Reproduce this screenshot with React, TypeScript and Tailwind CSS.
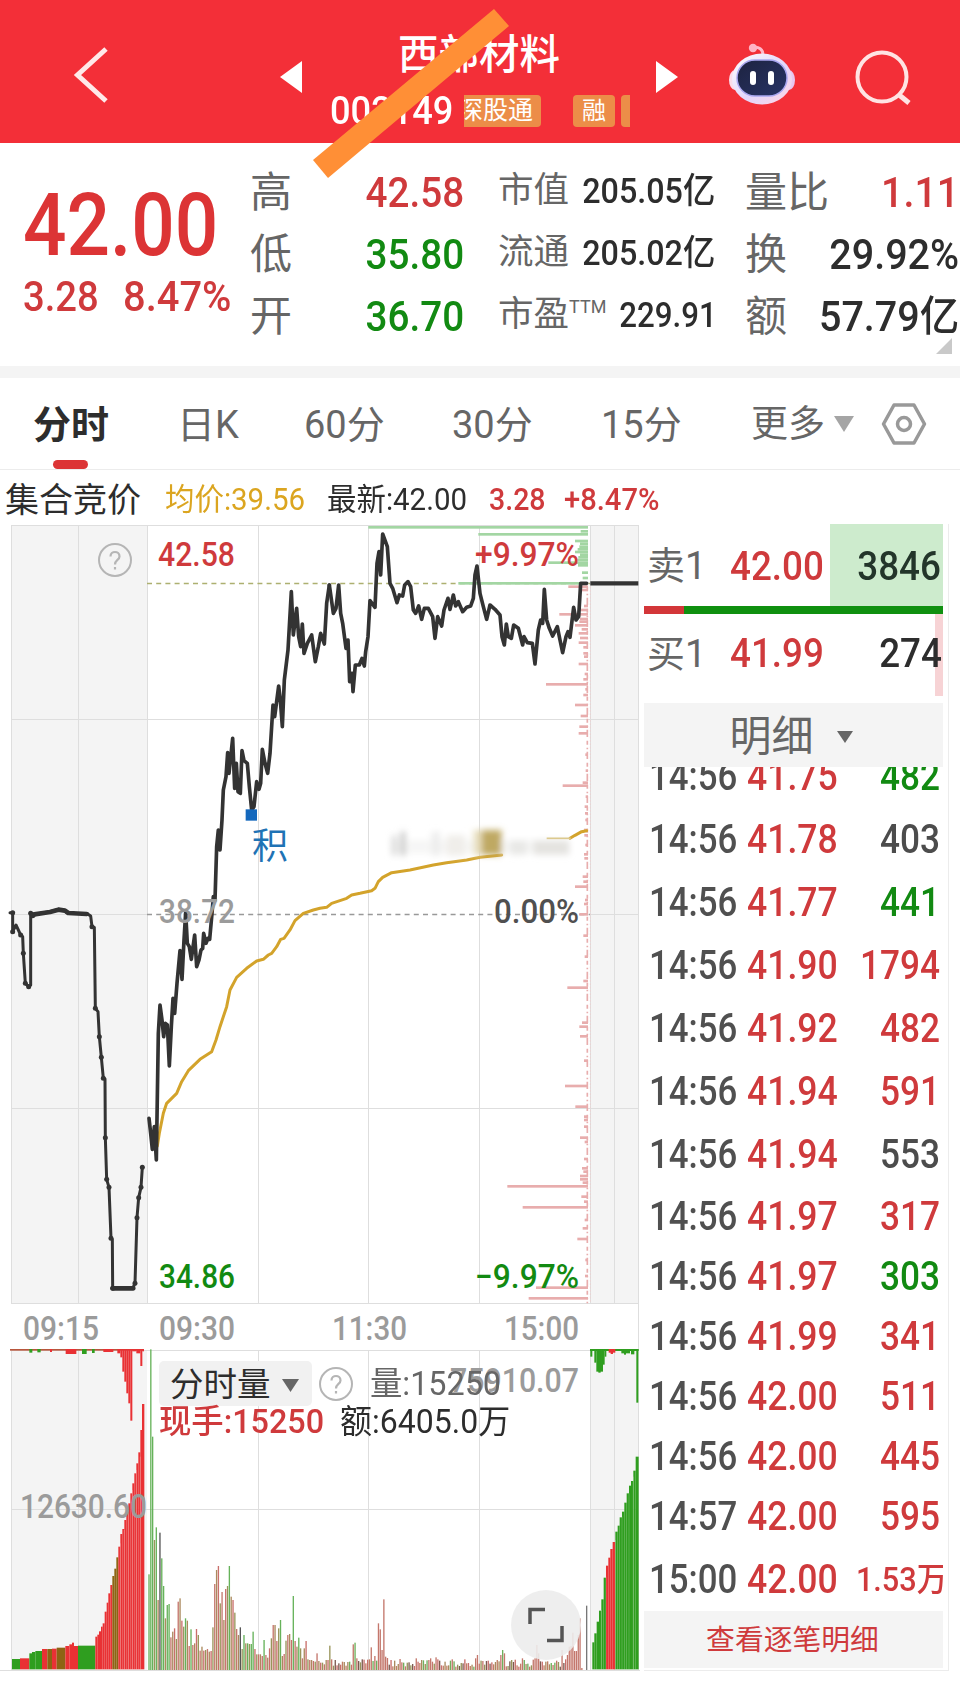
import React from 'react';
import { clsx } from 'clsx';

interface Stat {
  label: string;
  sup?: string;
  value: string;
  tone?: 'up' | 'down';
}

interface Trade {
  time: string;
  price: string;
  volume: string;
  tone: string;
  height: string;
}

const rangeStats: Stat[] = [
  { label: '高', value: '42.58', tone: 'up' },
  { label: '低', value: '35.80', tone: 'down' },
  { label: '开', value: '36.70', tone: 'down' },
];

const capStats: Stat[] = [
  { label: '市值', value: '205.05亿' },
  { label: '流通', value: '205.02亿' },
  { label: '市盈', sup: 'TTM', value: '229.91' },
];

const turnoverStats: Stat[] = [
  { label: '量比', value: '1.11', tone: 'up' },
  { label: '换', value: '29.92%' },
  { label: '额', value: '57.79亿' },
];

const RED = 'text-[#cf3a3c]';
const GREEN = 'text-[#128a12]';
const GRAY = 'text-[#4c4c4c]';

const trades: Trade[] = [
  { time: '14:56', price: '41.75', volume: '482', tone: GREEN, height: 'h-[63px]' },
  { time: '14:56', price: '41.78', volume: '403', tone: GRAY, height: 'h-[63px]' },
  { time: '14:56', price: '41.77', volume: '441', tone: GREEN, height: 'h-[63px]' },
  { time: '14:56', price: '41.90', volume: '1794', tone: RED, height: 'h-[63px]' },
  { time: '14:56', price: '41.92', volume: '482', tone: RED, height: 'h-[63px]' },
  { time: '14:56', price: '41.94', volume: '591', tone: RED, height: 'h-[63px]' },
  { time: '14:56', price: '41.94', volume: '553', tone: GRAY, height: 'h-[63px]' },
  { time: '14:56', price: '41.97', volume: '317', tone: RED, height: 'h-[60px]' },
  { time: '14:56', price: '41.97', volume: '303', tone: GREEN, height: 'h-[60px]' },
  { time: '14:56', price: '41.99', volume: '341', tone: RED, height: 'h-[60px]' },
  { time: '14:56', price: '42.00', volume: '511', tone: RED, height: 'h-[60px]' },
  { time: '14:56', price: '42.00', volume: '445', tone: RED, height: 'h-[60px]' },
  { time: '14:57', price: '42.00', volume: '595', tone: RED, height: 'h-[60px]' },
  { time: '15:00', price: '42.00', volume: '1.53万', tone: RED, height: 'h-[67px]' },
];

// Chart geometry is kept in thirds of a pixel, origin at the top of the price pane
const AUCTION =
  '30,1178 38,1178 38,1235 48,1215 55,1230 62,1245 68,1250 70,1300 76,1390 86,1400 92,1395 92,1180 98,1187 120,1180 150,1175 175,1168 190,1170 200,1178 225,1180 262,1181 272,1188 276,1220 283,1222 286,1465 294,1475 298,1550 304,1612 310,1675 315,1677 316,1853 320,1978 327,2002 333,2155 337,2158 338,2305 398,2305 405,2290 411,2093 416,2033 423,2002 427,1942';

const AUCTION_DOTS = [
  [38, 1178], [38, 1235], [62, 1245], [70, 1300], [76, 1390], [86, 1400], [92, 1180], [98, 1187], [276, 1220], [286, 1465],
  [298, 1550], [304, 1612], [310, 1675], [316, 1853], [320, 1978], [327, 2002], [333, 2155], [338, 2305], [405, 2290],
  [411, 2093], [416, 2033], [423, 2002], [427, 1942],
];

const PRICE_MORNING =
  '447,1795 452,1840 457,1888 463,1820 469,1920 475,1540 480,1455 486,1500 491,1550 496,1510 502,1515 508,1638 514,1520 519,1435 524,1480 531,1390 540,1292 546,1378 552,1260 557,1178 562,1270 568,1280 574,1318 584,1245 590,1340 597,1320 603,1290 608,1285 611,1240 618,1270 624,1255 629,1258 636,1180 640,1130 645,1140 650,980 655,930 660,990 666,900 670,810 678,770 683,698 687,760 698,655 704,805 709,730 714,815 721,820 726,692 732,722 742,730 748,800 755,870 762,860 770,785 777,808 782,790 787,688 795,730 803,760 810,700 819,555 824,590 836,498 841,540 847,620 853,480 864,390 874,215 880,345 890,265 896,350 902,380 907,312 912,400 922,370 935,345 946,425 955,380 962,340 973,372 980,250 988,195';

const PRICE_AFTERNOON =
  '28,195 40,280 48,265 56,195 62,280 68,310 78,385 84,360 89,485 96,460 99,515 106,435 118,435 126,415 133,438 137,395 144,350 150,242 165,262 171,130 177,95 182,165 188,42 202,80 210,190 218,205 231,248 238,225 248,228 254,195 264,185 272,200 280,270 287,280 296,258 305,298 313,265 325,265 338,290 345,355 353,290 365,318 372,270 384,235 390,268 400,225 407,258 415,245 428,275 440,262 452,258 460,235 465,165 471,138 480,220 490,260 500,298 510,255 525,268 540,285 546,350 553,375 559,312 565,350 574,355 581,315 595,325 608,375 612,350 622,368 637,370 645,432 655,330 662,300 668,310 673,208 680,300 688,325 698,348 712,320 720,360 728,398 738,350 744,335 750,352 761,262 768,300 776,290 782,190 800,190';

const AVERAGE =
  '472,1878 478,1840 490,1780 500,1750 515,1735 530,1720 545,1685 565,1652 600,1618 635,1595 648,1560 660,1520 680,1460 690,1410 710,1372 740,1345 770,1323 790,1318 805,1305 815,1300 830,1280 842,1258 852,1255 870,1230 885,1202 910,1180 940,1170 960,1165 980,1162 995,1150 1040,1135 1055,1125 1080,1120 1115,1112 1125,1105 1135,1085 1148,1072 1175,1058 1230,1050 1300,1035 1340,1028 1400,1020 1440,1012 1505,1005';

const AVERAGE_TAIL = '1710,955 1725,946 1745,935 1760,932';

// [y, left edge]
const SELL_LEVELS = [
  [22, 145], [43, 475], [34, 782], [63, 765], [71, 780], [80, 778], [88, 773], [96, 765], [104, 780], [112, 775], [120, 772],
  [128, 685], [136, 774], [158, 786], [174, 788], [190, 415],
];
const BUY_LEVELS = [
  [200, 745], [210, 783], [258, 792], [270, 780], [283, 718], [297, 780], [305, 778], [316, 765], [328, 785], [340, 776],
  [354, 780], [368, 776], [382, 790], [400, 790], [410, 792], [432, 776], [462, 794], [478, 790], [493, 678], [508, 796],
  [525, 790], [555, 765], [588, 782], [620, 778], [640, 776], [704, 796], [752, 797], [788, 788], [797, 728], [830, 797],
  [860, 794], [880, 795], [900, 796], [930, 792], [946, 793], [975, 796], [1003, 792], [1015, 793], [1070, 788], [1085, 790],
  [1100, 765], [1140, 795], [1152, 792], [1183, 778], [1247, 790], [1310, 794], [1383, 790], [1403, 742], [1508, 786],
  [1520, 778], [1549, 780], [1622, 792], [1698, 735], [1760, 766], [1790, 792], [1800, 792], [1820, 792], [1853, 780],
  [1866, 794], [1917, 792], [1945, 786], [1955, 790], [1968, 780], [1978, 780], [1988, 788], [1999, 562], [2030, 784],
  [2045, 792], [2062, 608], [2100, 794], [2125, 788], [2157, 772], [2220, 796], [2268, 795], [2303, 648], [2335, 626],
];

// Minute volume bars of the morning, measured as the y of their top edge
const VOLUME_TOPS = [
  733, 58, 320, 630, 592, 810, 608, 685, 768, 865, 825, 822, 922, 905, 895, 927, 815, 805, 872, 890, 865, 872, 948, 898, 945,
  940, 897, 915, 962, 950, 962, 960, 957, 965, 963, 892, 762, 720, 708, 820, 786, 870, 777, 768, 708, 800, 810, 848, 897, 915,
  892, 957, 915, 940, 940, 942, 942, 905, 957, 973, 973, 973, 978, 930, 975, 983, 955, 925, 885, 885, 933, 895, 870, 978, 972,
  932, 915, 912, 930, 798, 933, 950, 923, 955, 985, 955, 933, 988, 990, 990, 993, 995, 970, 993, 998, 998, 1003, 990, 990, 947,
];
const GREEN_BARS = [0, 1, 2, 4, 7, 8, 10, 11, 20, 23, 44, 52, 54, 56, 57, 63, 72, 79, 82];

const SPIKES: Record<number, number> = {
  12: 943, 13: 938, 14: 985, 22: 952, 24: 978, 26: 880, 27: 898, 28: 960, 29: 808, 30: 980, 31: 984, 38: 987, 47: 985, 55: 985,
  58: 982, 80: 985, 81: 975, 94: 975, 95: 960, 96: 970, 106: 985, 113: 985, 114: 945, 115: 970, 128: 960, 131: 975, 132: 950,
  133: 948, 134: 908, 135: 963, 136: 963, 137: 915, 138: 865, 139: 1014,
};

const VOLUME_COLORS = ['#c4776c', '#ab8a5e', '#c96f6b', '#98955a', '#6fb05c', '#c07f64', '#7c5a50'];

const minuteBars = [
  ...VOLUME_TOPS.map((top, i) => ({
    x: 445 + i * 5.48,
    top,
    fill: GREEN_BARS.includes(i) ? '#66b25a' : i === 6 || i === 50 ? '#555' : VOLUME_COLORS[(i * 5) % 4],
  })),
  ...Array.from({ length: 140 }, (_, i) => ({
    x: 993 + i * 5.4,
    top: SPIKES[i] ?? 988 + ((i * 37 + ((i * i) % 11) * 5) % 23),
    fill: i === 95 || i === 13 ? '#6fb05c' : SPIKES[i] ? '#c4776c' : VOLUME_COLORS[(i * 3 + (i >> 2)) % 7],
  })),
  { x: 1758, top: 827, fill: '#777' },
];

// [x, width, top, colour]
const R = '#e93134';
const G = '#2f9e1f';
const O = '#8d6414';
const auctionBars: [number, number, number, string][] = [
  [36, 24, 987, G], [60, 28, 985, R], [88, 8, 970, G], [96, 10, 966, G], [106, 20, 963, G], [126, 16, 957, R], [142, 14, 957, O],
  [156, 14, 956, R], [170, 26, 953, O], [196, 12, 948, R], [208, 8, 943, R], [216, 6, 938, R], [222, 12, 948, R],
  [234, 52, 947, G], [286, 6, 920, R], [292, 5, 914, R], [297, 6, 904, R], [303, 5, 890, R], [308, 6, 880, R], [314, 6, 845, R],
  [320, 5, 818, R], [325, 6, 790, R], [331, 6, 765, R], [337, 6, 738, O], [343, 6, 716, O], [349, 6, 682, O], [355, 6, 650, R],
  [361, 6, 612, R], [367, 6, 597, R], [373, 6, 570, R], [379, 6, 545, R], [385, 6, 520, R], [391, 6, 490, R], [397, 6, 460, R],
  [403, 6, 430, R], [409, 6, 400, R], [415, 6, 367, R], [421, 5, 300, R], [426, 7, 222, R],
];
const closeBars: [number, number, number, string][] = [
  [1777, 6, 937, G], [1783, 7, 910, G], [1790, 7, 875, G], [1797, 7, 842, G], [1804, 7, 808, G], [1811, 7, 743, G],
  [1818, 7, 707, R], [1825, 6, 683, R], [1831, 7, 657, R], [1838, 8, 636, R], [1846, 7, 605, G], [1853, 6, 587, G],
  [1859, 7, 562, G], [1866, 7, 545, G], [1873, 7, 518, G], [1880, 7, 490, G], [1887, 6, 467, G], [1893, 7, 453, G],
  [1900, 7, 422, G], [1907, 9, 380, G],
];
// Unmatched volume hangs from the top edge: [x, width, bottom, colour]
const hangingBars: [number, number, number, string][] = [
  [30, 402, 62, '#b8563c'], [88, 9, 68, G], [112, 10, 67, G], [150, 6, 66, R], [197, 32, 72, R], [246, 14, 72, G], [276, 8, 69, G],
  [310, 30, 66, R], [352, 9, 70, R], [361, 6, 82, R], [367, 6, 125, R], [373, 6, 155, R], [379, 6, 190, R], [385, 6, 220, R],
  [391, 6, 272, R], [397, 12, 64, R], [409, 12, 70, R], [421, 6, 108, R], [427, 5, 64, R],
  [1770, 146, 63, G], [1771, 6, 80, G], [1783, 6, 98, G], [1789, 20, 125, G], [1795, 7, 128, G], [1809, 5, 104, G],
  [1814, 5, 80, G], [1826, 20, 68, R], [1832, 7, 72, R], [1864, 26, 70, G], [1872, 6, 74, G], [1893, 10, 73, G], [1909, 6, 218, G],
];

const toneClass = (tone?: 'up' | 'down') =>
  tone === 'up' ? RED : tone === 'down' ? GREEN : 'text-[#2d2d2d]';

const HelpIcon: React.FC = () => (
  <svg viewBox="0 0 34 34" className="size-[34px]" fill="none" stroke="#b5b5b5" strokeWidth="2">
    <circle cx="17" cy="17" r="16" />
    <path d="M12.5 13.5c0-6 9-6 9 0 0 3.5-4.5 3.5-4.5 8M17 24v2.6" strokeWidth="2.2" />
  </svg>
);

const RobotIcon: React.FC = () => (
  <svg viewBox="0 0 70 64" className="h-16 w-[70px]">
    <defs>
      <linearGradient id="shell" x1="0" y1="0" x2="1" y2="1">
        <stop offset="0" stopColor="#fff" />
        <stop offset=".55" stopColor="#e2d6fb" />
        <stop offset="1" stopColor="#ffd5e3" />
      </linearGradient>
      <linearGradient id="visor" x1="0" y1="0" x2="1" y2="1">
        <stop offset="0" stopColor="#1d2340" />
        <stop offset="1" stopColor="#283365" />
      </linearGradient>
    </defs>
    <path d="M26 5.500c6-1 10 2 10 7" fill="none" stroke="#ffb9cb" strokeWidth="3" />
    <circle cx="26" cy="6" r="4.200" fill="#ffb3c4" />
    <ellipse cx="8" cy="38" rx="6" ry="10" fill="#fbdcea" />
    <ellipse cx="62" cy="38" rx="6" ry="10" fill="#e8c6f0" />
    <ellipse cx="35" cy="37" rx="30" ry="25.500" fill="url(#shell)" />
    <rect x="10" y="18" width="50" height="36" rx="18" fill="url(#visor)" stroke="#a8a6ef" strokeWidth="1.500" />
    <rect x="23" y="29" width="6" height="14" rx="3" fill="#fff" />
    <rect x="41" y="29" width="6" height="14" rx="3" fill="#fff" />
  </svg>
);

const Header: React.FC = () => (
  <header className="relative h-[143px] bg-[#f32f38] text-white">
    <div className="flex h-full items-center">
      <svg viewBox="0 0 40 60" className="ml-[71px] mt-[7px] h-[60px] w-10" fill="none" stroke="#ffe9e9" strokeWidth="5">
        <path d="M35 4 6.500 30 35 56" />
      </svg>
      <svg viewBox="0 0 22 32" className="ml-[169px] mt-[11px] h-8 w-[22px]" fill="#fff">
        <path d="M0 16 22 0v32z" />
      </svg>
      <div className="ml-[28px] mt-[15px] w-[300px]">
        <h1 className="ml-[68px] text-[40.5px] leading-[50px] font-medium">西部材料</h1>
        <div className="mt-[14px] flex h-[34px] items-center">
          <span className="w-[134px] origin-left scale-x-[.94] text-[38.5px] leading-[34px] font-medium">002149</span>
          <span className="flex h-8 w-[77px] justify-end overflow-hidden rounded-r-[4px] bg-[#ec8d48] pr-2 text-[25px] leading-8 whitespace-nowrap">
            深股通
          </span>
          <span className="ml-8 h-8 w-[42px] rounded-[4px] bg-[#ec8d48] text-center text-[24px] leading-8">融</span>
          <span className="ml-[6px] h-8 w-[9px] rounded-l-[4px] bg-[#ec8d48]" />
        </div>
      </div>
      <svg viewBox="0 0 22 32" className="ml-[26px] mt-[11px] h-8 w-[22px]" fill="#fff">
        <path d="M22 16 0 0v32z" />
      </svg>
      <div className="ml-[49px] mt-[5px]">
        <RobotIcon />
      </div>
      <svg viewBox="0 0 60 60" className="ml-[57px] mt-[14px] size-[60px]" fill="none" stroke="#ffe3e3" strokeWidth="4">
        <circle cx="28" cy="28" r="24.500" />
        <path d="m44 45 11 9" strokeWidth="5" />
      </svg>
    </div>
    <svg viewBox="0 0 200 172" className="absolute top-[7px] left-[311px] z-10 h-[172px] w-[200px]">
      <path d="M2 153 183 2l15 17L17 171z" fill="#ff8f36" />
    </svg>
  </header>
);

const Quote: React.FC = () => (
  <section className="relative flex h-[223px] whitespace-nowrap">
    <div className="w-[251px] pl-[23px]">
      <div className="mt-[37px] origin-left scale-x-[.88] text-[87px] leading-[90px] font-medium text-[#dc3435]">42.00</div>
      <div className={clsx('mt-[2px] flex text-[42px] leading-[50px] font-medium', RED)}>
        <span className="w-[100px] origin-left scale-x-[.91]">3.28</span>
        <span className="origin-left scale-x-[.95]">8.47%</span>
      </div>
    </div>
    <div className="-ml-px w-[214px] pt-[18px]">
      {rangeStats.map((s) => (
        <div key={s.label} className="flex h-[62px] items-center justify-between">
          <span className="text-[42px] text-[#666]">{s.label}</span>
          <span className={clsx('origin-right scale-x-[.92] text-[42px] font-medium', toneClass(s.tone))}>{s.value}</span>
        </div>
      ))}
    </div>
    <div className="ml-[34px] w-[213px] pt-[17px]">
      {capStats.map((s) => (
        <div key={s.label} className="flex h-[62px] items-center justify-between">
          <span className="flex text-[35.5px] text-[#666]">
            {s.label}
            {s.sup && <sup className="top-[2px] text-[18px] leading-[34px]">{s.sup}</sup>}
          </span>
          <span className={clsx('origin-right pt-[2px] text-[35.5px] font-medium text-[#2d2d2d]', s.sup ? 'scale-x-[.88]' : 'scale-x-[.91]')}>
            {s.value}
          </span>
        </div>
      ))}
    </div>
    <div className="ml-[34px] w-[214px] pt-[18px]">
      {turnoverStats.map((s) => (
        <div key={s.label} className="flex h-[62px] items-center justify-between">
          <span className="text-[42px] text-[#666]">{s.label}</span>
          <span className={clsx('origin-right scale-x-[.94] text-[42px] font-medium', toneClass(s.tone))}>{s.value}</span>
        </div>
      ))}
    </div>
    <svg viewBox="0 0 16 16" className="absolute right-2 bottom-3 size-4" fill="#c9c9c9">
      <path d="M16 0v16H0z" />
    </svg>
  </section>
);

const Tabs: React.FC = () => (
  <nav className="relative flex h-[92px] items-center border-b border-[#ececec] pt-[3px] text-[38px] text-[#666]">
    <span className="ml-[33px] w-[144px] font-bold text-[#2d2d2d]">分时</span>
    <span className="w-[127px] origin-left">日K</span>
    <span className="w-[148px]">60分</span>
    <span className="w-[149px]">30分</span>
    <span className="w-[150px]">15分</span>
    <span className="w-[83px] text-[37px]">更多</span>
    <svg viewBox="0 0 20 16" className="-mt-[2px] h-4 w-5" fill="#a5a5a5">
      <path d="M0 0h20L10 16z" />
    </svg>
    <svg viewBox="0 0 46 42" className="-mt-[3px] ml-[27px] h-[42px] w-[46px]" fill="none" stroke="#999" strokeWidth="3.500" strokeLinejoin="round">
      <path d="M13 2h20l10.500 19L33 40H13L2.500 21z" />
      <circle cx="23" cy="21" r="6.500" />
    </svg>
    <i className="absolute bottom-0 left-[53px] h-[9px] w-[35px] rounded-full bg-[#dc3435]" />
  </nav>
);

const Summary: React.FC = () => (
  <div className="flex h-[54px] items-center pt-[6px] text-[31px] font-medium whitespace-nowrap text-[#2d2d2d]">
    <span className="ml-[5px] w-[160px] text-[34px] font-normal">集合竞价</span>
    <span className="w-[162px] origin-left scale-x-[.95] font-normal text-[#dba520]">均价:39.56</span>
    <span className="w-[162px] origin-left scale-x-[.95] font-normal">最新:42.00</span>
    <span className={clsx('w-[75px] origin-left scale-x-[.92]', RED)}>3.28</span>
    <span className={clsx('origin-left scale-x-[.94]', RED)}>+8.47%</span>
  </div>
);

interface LabelProps {
  x: number;
  y: number;
  width: number;
  fill: string;
  children: string;
}

const AxisLabel: React.FC<LabelProps> = ({ x, y, width, fill, children }) => (
  <text x={x} y={y} textLength={width} lengthAdjust="spacingAndGlyphs" fill={fill} fontSize="33" fontWeight="500">
    {children}
  </text>
);

const Chart: React.FC = () => (
  <div className="relative h-[1160px] w-[640px]">
    <svg viewBox="0 524 640 1160" className="h-[1160px] w-[640px]">
      <defs>
        <filter id="smear" x="-10%" y="-30%" width="120%" height="160%">
          <feGaussianBlur stdDeviation="10 9" />
        </filter>
      </defs>
      <g fill="#f4f4f4">
        <path d="M11 525h136v778H11zM590 525h49v778h-49zM11 1350h136v320H11zM590 1350h49v320h-49z" />
      </g>
      <g stroke="#dedede" strokeWidth="1">
        <path d="M11 525.500h628M11 719.500h628M11 914.500h136M590 914.500h49M11 1108.500h628M11 1303.500h628M11 1350.500h628M11 1509.500h628M0 1670.500h640" />
        <path d="M11.500 525v778M78.500 525v778M147.500 525v778M258.500 525v778M368.500 525v778M479.500 525v778M590.500 525v778M614.500 525v778" />
        <path d="M11.500 1350v320M78.500 1350v320M258.500 1350v320M368.500 1350v320M479.500 1350v320M590.500 1350v320M614.500 1350v320M638.500 525v1145" />
      </g>
      <path d="M147 583.500h443" stroke="#adb070" strokeDasharray="5 4.200" strokeWidth="1.500" />
      <path d="M147 914.500h443" stroke="#999" strokeDasharray="5 4.200" strokeWidth="1.500" />

      <g transform="translate(0 520) scale(.33333)">
        {SELL_LEVELS.map(([y, x]) => (
          <rect key={y} x={960 + x} y={y - 4} width={804 - x} height="8" fill="#a3d6a3" />
        ))}
        {BUY_LEVELS.map(([y, x]) => (
          <rect key={y} x={960 + x} y={y - 4} width={804 - x} height="8" fill="#e8adad" />
        ))}
        <path d="M1762 200V2350" stroke="#e8adad" strokeWidth="5" strokeDasharray="12 9 5 7 22 11" />
        <path d="M1771 200V2350" stroke="#f3caca" strokeWidth="2" strokeDasharray="5 5" />
        <g fill="none" strokeLinejoin="round" strokeLinecap="round">
          <polyline points={AVERAGE} stroke="#d3a32b" strokeWidth="9" />
          <polyline points={AVERAGE_TAIL} stroke="#d3a32b" strokeWidth="9" />
          <polyline points={AUCTION} stroke="#333" strokeWidth="9" />
          <path d="M338 2305h62M98 1184l52-8 25-7 20 3 10 7 55 3" stroke="#333" strokeWidth="14" />
          <polyline points={PRICE_MORNING} stroke="#333" strokeWidth="11" />
          <polyline points={PRICE_AFTERNOON} stroke="#333" strokeWidth="11" transform="translate(960 0)" />
        </g>
        {AUCTION_DOTS.map(([cx, cy]) => (
          <circle key={`${cx}-${cy}`} cx={cx} cy={cy} r="7.500" fill="#333" />
        ))}
        <path d="M1771 190h144" stroke="#333" strokeWidth="13" />
        <g filter="url(#smear)">
          <rect x="1170" y="960" width="530" height="40" fill="#f6f6f5" />
          <rect x="1178" y="945" width="10" height="62" fill="#ccc" />
          <rect x="1203" y="935" width="12" height="72" fill="#bbb" />
          <rect x="1295" y="935" width="25" height="72" fill="#ededed" />
          <rect x="1340" y="945" width="55" height="62" fill="#f0eeea" />
          <rect x="1420" y="930" width="40" height="75" fill="#e8dfc0" />
          <rect x="1445" y="930" width="60" height="75" fill="#bfa964" />
          <rect x="1530" y="962" width="50" height="42" fill="#e8e8e6" />
          <rect x="1600" y="962" width="108" height="42" fill="#e4e3e0" />
        </g>
        <path d="M1640 955h72" stroke="#dcc98e" strokeWidth="5" />
        <rect x="737" y="868" width="34" height="34" fill="#1468bd" />
      </g>
      <text x="252" y="859" fontSize="36" fill="#1f73b5">积</text>

      <AxisLabel x={158} y={565.5} width={77} fill="#cf3a3c">42.58</AxisLabel>
      <AxisLabel x={475} y={565.5} width={104} fill="#cf3a3c">+9.97%</AxisLabel>
      <AxisLabel x={159} y={923} width={76} fill="#9b9b9b">38.72</AxisLabel>
      <AxisLabel x={494} y={923} width={85} fill="#505050">0.00%</AxisLabel>
      <AxisLabel x={159} y={1287.5} width={76} fill="#128a12">34.86</AxisLabel>
      <AxisLabel x={475} y={1287.5} width={104} fill="#128a12">−9.97%</AxisLabel>
      <AxisLabel x={23} y={1339.5} width={76} fill="#9b9b9b">09:15</AxisLabel>
      <AxisLabel x={159} y={1339.5} width={76} fill="#9b9b9b">09:30</AxisLabel>
      <AxisLabel x={332} y={1339.5} width={75} fill="#9b9b9b">11:30</AxisLabel>
      <AxisLabel x={504} y={1339.5} width={75} fill="#9b9b9b">15:00</AxisLabel>

      <g transform="translate(0 1330) scale(.33333)">
        {minuteBars.map((bar) => (
          <rect key={bar.x} x={bar.x} y={bar.top} width="4" height={1020 - bar.top} fill={bar.fill} />
        ))}
        {[...auctionBars, ...closeBars].map(([x, w, top, fill]) => (
          <rect key={x} x={x} y={top} width={w} height={1018 - top} fill={fill} />
        ))}
        <path
          d="M373 600v418M385 540v478M397 480v538M409 420v598M421 380v638M361 640v378M1804 840v178M1818 740v278M1846 630v388M1866 560v458M1887 490v528M1900 440v578"
          stroke="#fff"
          strokeOpacity=".3"
          strokeWidth="2"
        />
        {hangingBars.map(([x, w, bottom, fill]) => (
          <rect key={x} x={x} y="57" width={w} height={bottom - 57} fill={fill} />
        ))}
      </g>
      <AxisLabel x={20} y={1517.5} width={127} fill="#9b9b9b">12630.60</AxisLabel>
      <AxisLabel x={450} y={1391.5} width={129} fill="#9b9b9b">75910.07</AxisLabel>
    </svg>

    <div className="absolute top-[19px] left-[98px]">
      <HelpIcon />
    </div>
    <div className="absolute top-[837px] left-[159px] w-[400px] whitespace-nowrap">
      <div className="flex h-[45px] items-center">
        <button type="button" className="flex h-[45px] w-[153px] items-center rounded-[5px] bg-[#f1f1f1] pt-[3px] pl-[11px] text-[33.5px] text-[#2d2d2d]">
          分时量
          <svg viewBox="0 0 17 13" className="ml-[11px] h-[13px] w-[17px]" fill="#666">
            <path d="M0 0h17L8.500 13z" />
          </svg>
        </button>
        <span className="ml-[7px]">
          <HelpIcon />
        </span>
        <span className="ml-[17px] origin-left scale-x-[.98] text-[33px] text-[#666]">量:15250</span>
      </div>
      <div className="-mt-[4px] flex text-[33px] leading-10 font-medium">
        <span className={clsx('w-[181px] origin-left scale-x-[.98]', RED)}>现手:15250</span>
        <span className="origin-left scale-x-[.97] font-normal text-[#2d2d2d]">额:6405.0万</span>
      </div>
    </div>
    <button type="button" className="absolute top-[1066px] left-[511px] flex size-[70px] items-center justify-center rounded-full bg-[#ececec]/90">
      <svg viewBox="0 0 36 36" className="size-9" fill="none" stroke="#555" strokeWidth="3.500">
        <path d="M2 17V2.500h15M34 19v14.500H19" />
      </svg>
    </button>
  </div>
);

const OrderBook: React.FC = () => (
  <aside className="ml-[4px] h-[1147px] w-[305px] border-r border-b border-[#ececec]">
    <div className="w-[299px]">
      <div className="flex h-[82px] items-center whitespace-nowrap">
        <span className="ml-[3px] w-[83px] pt-[2px] text-[38px] text-[#666]">卖1</span>
        <span className={clsx('w-[100px] origin-left scale-x-[.92] pt-[3px] text-[40px] font-medium', RED)}>42.00</span>
        <span className="flex h-full flex-1 items-center justify-end bg-[#cdebcd] pt-[3px] pr-[2px] text-[40px] font-medium text-[#23352a]">
          <span className="origin-right scale-x-[.92]">3846</span>
        </span>
      </div>
      <div className="flex h-2">
        <i className="w-10 bg-[#d33639]" />
        <i className="flex-1 bg-[#109010]" />
      </div>
      <div className="flex h-[82px] items-center bg-[linear-gradient(to_left,#f7d3d5_8px,transparent_8px)] pr-px pb-[2px] whitespace-nowrap">
        <span className="ml-[3px] w-[83px] text-[38px] text-[#666]">买1</span>
        <span className={clsx('origin-left scale-x-[.92] text-[40px] font-medium', RED)}>41.99</span>
        <span className="flex-1 origin-right scale-x-[.92] text-right text-[40px] font-medium text-[#2d2d2d]">274</span>
      </div>
      <button type="button" className="mt-[7px] flex h-16 w-full items-center justify-center bg-[#f4f4f4] pt-[3px] pr-[5px] text-[42px] text-[#666]">
        明细
        <svg viewBox="0 0 16 12" className="ml-[23px] h-3 w-4" fill="#666">
          <path d="M0 0h16L8 12z" />
        </svg>
      </button>
      <div className="h-[844px] overflow-hidden">
        <ul className="-mt-[21.5px]">
          {trades.map((t, i) => (
            <li key={i} className={clsx('flex items-center pr-[3px] pl-[5px] text-[40px] font-medium whitespace-nowrap', t.height)}>
              <span className="w-[98px] origin-left scale-x-[.87] text-[#505050]">{t.time}</span>
              <span className={clsx('origin-left scale-x-[.89]', RED)}>{t.price}</span>
              <span
                className={clsx(
                  'origin-right text-right',
                  t.tone,
                  t.volume.includes('万') ? 'ml-auto scale-x-[.93] text-[33px]' : 'flex-1 scale-x-[.88]'
                )}
              >
                {t.volume}
              </span>
            </li>
          ))}
        </ul>
      </div>
      <button type="button" className={clsx('h-[57px] w-full bg-[#f4f4f4] pt-[3px] pr-[2px] text-[28.8px]', RED)}>
        查看逐笔明细
      </button>
    </div>
  </aside>
);

const App: React.FC = () => {
  return (
    <main className="h-[1684px] w-[960px] overflow-hidden bg-white font-['Roboto','Noto_Sans_CJK_SC',sans-serif]">
      <Header />
      <Quote />
      <div className="h-3 bg-[#f4f4f4]" />
      <Tabs />
      <Summary />
      <div className="flex items-start">
        <Chart />
        <OrderBook />
      </div>
    </main>
  );
};

export default App;
